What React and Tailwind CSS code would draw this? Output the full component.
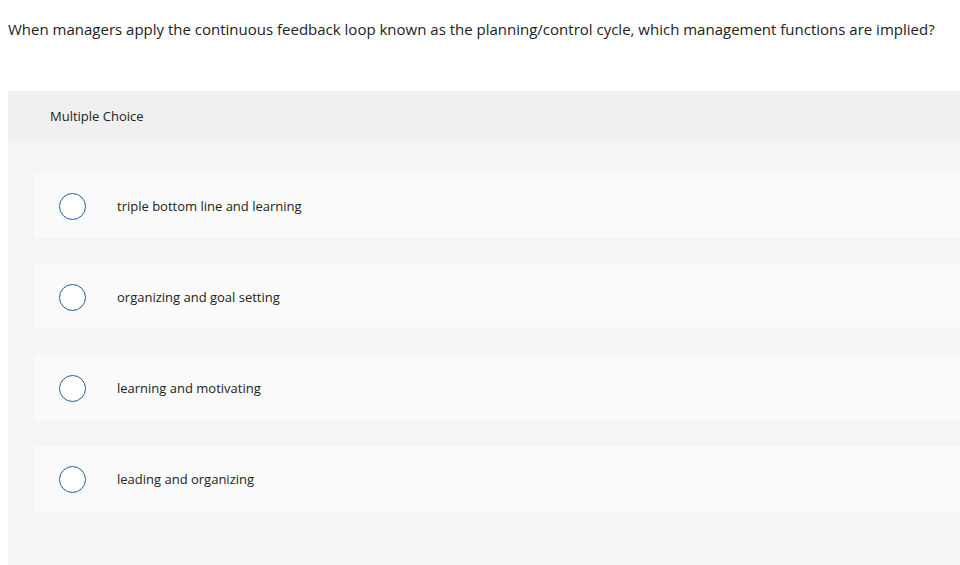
const OPTIONS = [
  'triple bottom line and learning',
  'organizing and goal setting',
  'learning and motivating',
  'leading and organizing',
];

function Option({ label }) {
  return (
    <div className="flex items-center h-[65px] bg-[#fafafa] pl-[25px]">
      <span className="w-[27px] h-[27px] rounded-full border-[1.5px] border-[#1f5f99] bg-white shrink-0 mt-[1px]" />
      <span className="ml-[31px] text-[13px] text-[#222] pt-[2px]">{label}</span>
    </div>
  );
}

export default function App() {
  return (
    <div
      className="w-[960px] h-[565px] overflow-hidden bg-white text-[#222]"
      style={{ fontFamily: '"Open Sans", "Liberation Sans", sans-serif' }}
    >
      {/* Question */}
      <p className="pl-[8px] pt-[18px] text-[15px] leading-[22px]">
        When managers apply the continuous feedback loop known as the planning/control cycle, which management functions are implied?
      </p>

      {/* Panel */}
      <div className="ml-[8px] mt-[51px]">
        <div className="h-[50px] bg-[#f0f0f0] flex items-center pl-[42px] pt-[2px] text-[13px]">
          Multiple Choice
        </div>
        <div className="bg-[#f5f5f5] pl-[26px] pt-[32px] pb-[60px] flex flex-col gap-[26px]">
          {OPTIONS.map((o) => (
            <Option key={o} label={o} />
          ))}
        </div>
      </div>
    </div>
  );
}
